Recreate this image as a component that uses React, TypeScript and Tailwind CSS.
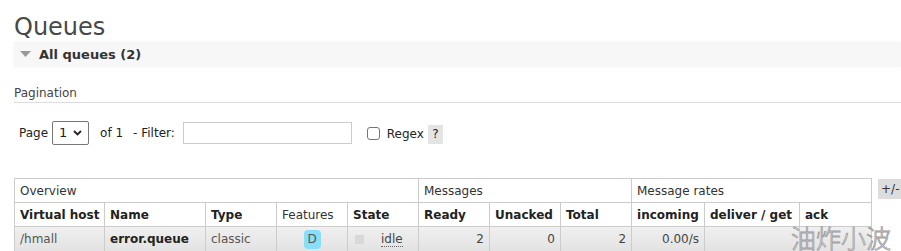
import React from "react";

const font = { fontFamily: '"DejaVu Sans", Verdana, sans-serif' };

export default function App() {
  const th2 = "border border-[#ccc] px-[5px] h-[24px] text-left font-bold text-[12px] text-[#222] whitespace-nowrap overflow-hidden";
  const td = "border border-[#ccc] px-[5px] h-[25px] text-[12px] text-[#444] whitespace-nowrap";
  return (
    <div className="relative w-[901px] h-[251px] overflow-hidden bg-white" style={font}>
      <div className="pl-[14px] pt-[13px]">
        <h1 className="text-[24px] leading-[28px] text-[#484848] font-normal">Queues</h1>
        <div className="mt-[1px] h-[25px] bg-[#f7f7f7] flex items-center pl-[6px] shadow-[0_0_4px_#f7f7f7]">
          <svg width="11" height="7" viewBox="0 0 11 7" className="mr-[8px]">
            <polygon points="0,0 11,0 5.5,6" fill="#999" />
          </svg>
          <span className="text-[13px] font-bold text-[#333]">All queues (2)</span>
        </div>
        <div className="mt-[19px] text-[12px] text-[#444] leading-[14px]">Pagination</div>
        <div className="mt-[2px] border-b border-[#ddd]" />
        <div className="mt-[17px] flex items-center pl-[5px] text-[12px] text-[#222] h-[25px]">
          <span>Page</span>
          <div className="ml-[4px] w-[37px] h-[24px] border border-[#777] rounded-[2px] flex items-center justify-between px-[6px]">
            <span className="text-[13px]">1</span>
            <svg width="9" height="6" viewBox="0 0 9 6"><polyline points="1,1 4.5,4.5 8,1" fill="none" stroke="#222" strokeWidth="1.8" /></svg>
          </div>
          <span className="ml-[11px]">of 1</span>
          <span className="ml-[10px]">- Filter:</span>
          <div className="ml-[8px] w-[169px] h-[22px] border border-[#ccc]" />
          <div className="ml-[15px] w-[13px] h-[13px] border border-[#777] rounded-[3px] mt-[1px]" />
          <span className="ml-[7px] mt-[3px]">Regex</span>
          <span className="ml-[4px] mt-[3px] w-[15px] h-[19px] bg-[#e4e4e4] flex items-center justify-center">?</span>
        </div>
        <div className="mt-[33px] flex items-start">
          <table className="border-collapse table-fixed w-[857px]">
            <colgroup>
              <col className="w-[90px]" />
              <col className="w-[101px]" />
              <col className="w-[71px]" />
              <col className="w-[71px]" />
              <col className="w-[71px]" />
              <col className="w-[71px]" />
              <col className="w-[71px]" />
              <col className="w-[71px]" />
              <col className="w-[73px]" />
              <col className="w-[95px]" />
              <col className="w-[72px]" />
            </colgroup>
            <tbody>
              <tr className="bg-white">
                <td colSpan={5} className="border border-[#ccc] px-[5px] h-[24px] text-[12px] text-[#333]">Overview</td>
                <td colSpan={3} className="border border-[#ccc] px-[5px] h-[24px] text-[12px] text-[#333]">Messages</td>
                <td colSpan={3} className="border border-[#ccc] px-[5px] h-[24px] text-[12px] text-[#333]">Message rates</td>
              </tr>
              <tr className="bg-white">
                <th className={th2}>Virtual host</th>
                <th className={th2}>Name</th>
                <th className={th2}>Type</th>
                <th className={th2 + " !font-normal !text-[#333]"}>Features</th>
                <th className={th2}>State</th>
                <th className={th2}>Ready</th>
                <th className={th2}>Unacked</th>
                <th className={th2}>Total</th>
                <th className={th2}>incoming</th>
                <th className={th2}>deliver / get</th>
                <th className={th2}>ack</th>
              </tr>
              <tr className="bg-gradient-to-b from-[#f0f0f0] to-[#e2e2e2]">
                <td className={td + " text-[#555]"}>/hmall</td>
                <td className={td + " font-bold !text-[#222]"}>error.queue</td>
                <td className={td + " text-[#555]"}>classic</td>
                <td className={td + " text-center"}>
                  <span className="inline-flex items-center justify-center w-[17px] h-[19px] rounded-[4px] bg-[#88ddf8] text-[#555] text-[12px]">D</span>
                </td>
                <td className={td}>
                  <span className="inline-block w-[9px] h-[9px] bg-[#d8d8d8] ml-[2px] mr-[17px] align-middle" />
                  <span className="border-b border-dotted border-[#666] leading-[13px] inline-block">idle</span>
                </td>
                <td className={td + " text-right"}>2</td>
                <td className={td + " text-right"}>0</td>
                <td className={td + " text-right"}>2</td>
                <td className={td + " text-right"}>0.00/s</td>
                <td className={td}></td>
                <td className={td}></td>
              </tr>
            </tbody>
          </table>
          <div className="ml-[6px] mt-[1px] w-[26px] h-[20px] bg-[#ddd] text-[12px] text-[#333] flex items-center pl-[3px] whitespace-nowrap">+/-</div>
        </div>
      </div>
      <div
        className="absolute left-[791px] top-[224px] text-[25px] leading-[27px] text-white"
        style={{ fontFamily: '"Noto Sans CJK SC", sans-serif', fontWeight: 300, WebkitTextStroke: "0.8px #999" }}
      >
        油炸小波
      </div>
    </div>
  );
}
